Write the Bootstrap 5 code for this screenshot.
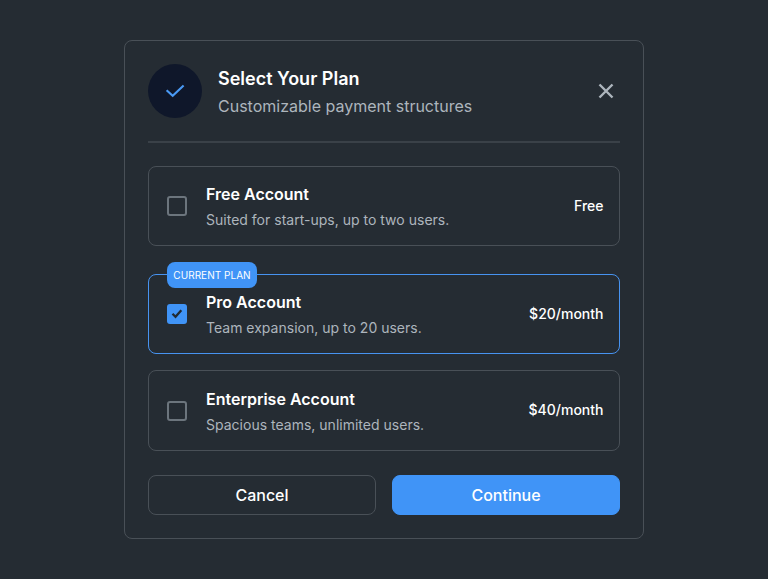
<!DOCTYPE html>
<html lang="en">
<head>
<meta charset="utf-8">
<meta name="viewport" content="width=device-width, initial-scale=1">
<title>Select Your Plan</title>
<link href="https://cdn.jsdelivr.net/npm/bootstrap@5.3.0/dist/css/bootstrap.min.css" rel="stylesheet">
<style>
  body { background: #252c33; color: #fff; font-family: Inter, "Liberation Sans", sans-serif; height: 579px; overflow: hidden; }
  .plan-dialog { width: 520px; height: 499px; margin-top: 40px; padding: 23px; border: 1px solid #495057; border-radius: 8px; }
  .dialog-head { height: 79px; padding-bottom: 23px; border-bottom: 2px solid #3a4148; }
  .seal { width: 54px; height: 54px; background: #0f172a; }
  .head-text { padding-top: 3px; }
  .dialog-title { font-size: 18px; line-height: 28px; font-weight: 600; }
  .dialog-sub { font-size: 16px; line-height: 27px; color: #adb5bd; }
  .close-btn { width: 28px; height: 28px; color: #adb5bd; }
  .plan-list { margin-top: 23px; }
  .plan { height: 80px; padding: 0 15.5px 0 18px; border: 1px solid #495057; border-radius: 8px; }
  .plan-current { margin-top: 28px; border-color: #4793f0; }
  .plan-tall { height: 81px; }
  .plan-tag { left: 18px; top: -13px; width: 90px; height: 26px; border-radius: 8px; background: #4094f7; font-size: 10px; letter-spacing: .03px; }
  .plan-text { padding-top: 2px; }
  .plan-name { font-size: 16px; line-height: 24px; font-weight: 600; }
  .plan-info { font-size: 14px; line-height: 24px; margin-top: 2px; color: #adb5bd; letter-spacing: .01px; }
  .plan-price { font-size: 14px; font-weight: 500; padding-bottom: 2px; }
  .tick { width: 20px; height: 20px; margin-right: 19px; border: 2px solid #6c757d; border-radius: 3px; }
  .tick-on { background: #4094f7; border: 0; }
  .action { height: 40px; border: 1px solid #495057; border-radius: 8px; color: #fff; font-size: 16px; font-weight: 500; padding: 0; }
  .action-main { background: #4094f7; border-color: #4094f7; }
</style>
</head>
<body>
<main class="plan-dialog mx-auto">
  <header class="dialog-head d-flex align-items-center">
    <div class="seal rounded-circle d-flex align-items-center justify-content-center flex-shrink-0">
      <svg width="24" height="24" viewBox="0 0 24 24" fill="none" stroke="#4a9af5" stroke-width="2.100"><path d="M3.600 11.200 9.700 16.800 20.600 6.500"/></svg>
    </div>
    <div class="head-text ms-3 flex-grow-1">
      <h1 class="dialog-title m-0">Select Your Plan</h1>
      <p class="dialog-sub m-0">Customizable payment structures</p>
    </div>
    <button type="button" class="close-btn btn p-0 border-0 d-flex align-items-center justify-content-center" aria-label="Close">
      <svg width="28" height="28" viewBox="0 0 28 28" fill="none" stroke="currentColor" stroke-width="2.400"><path d="M7.500 7.500 20.500 20.500M20.500 7.500 7.500 20.500"/></svg>
    </button>
  </header>

  <section class="plan plan-list d-flex align-items-center">
    <span class="tick flex-shrink-0" role="checkbox" aria-checked="false"></span>
    <div class="plan-text flex-grow-1">
      <h2 class="plan-name m-0">Free Account</h2>
      <p class="plan-info mb-0">Suited for start-ups, up to two users.</p>
    </div>
    <span class="plan-price">Free</span>
  </section>

  <section class="plan plan-current position-relative d-flex align-items-center">
    <span class="plan-tag position-absolute d-flex align-items-center justify-content-center">CURRENT PLAN</span>
    <span class="tick tick-on flex-shrink-0 d-flex" role="checkbox" aria-checked="true">
      <svg width="20" height="20" viewBox="0 0 20 20" fill="none" stroke="#212a33" stroke-width="2.300"><path d="M5.500 9.800 8.500 12.800 14.300 6.200"/></svg>
    </span>
    <div class="plan-text flex-grow-1">
      <h2 class="plan-name m-0">Pro Account</h2>
      <p class="plan-info mb-0">Team expansion, up to 20 users.</p>
    </div>
    <span class="plan-price">$20/month</span>
  </section>

  <section class="plan plan-tall d-flex align-items-center mt-3">
    <span class="tick flex-shrink-0" role="checkbox" aria-checked="false"></span>
    <div class="plan-text flex-grow-1">
      <h2 class="plan-name m-0">Enterprise Account</h2>
      <p class="plan-info mb-0">Spacious teams, unlimited users.</p>
    </div>
    <span class="plan-price">$40/month</span>
  </section>

  <div class="d-flex gap-3 mt-4">
    <button type="button" class="action btn flex-fill w-50">Cancel</button>
    <button type="button" class="action action-main btn flex-fill w-50">Continue</button>
  </div>
</main>
<script src="https://cdn.jsdelivr.net/npm/bootstrap@5.3.0/dist/js/bootstrap.bundle.min.js"></script>
</body>
</html>
